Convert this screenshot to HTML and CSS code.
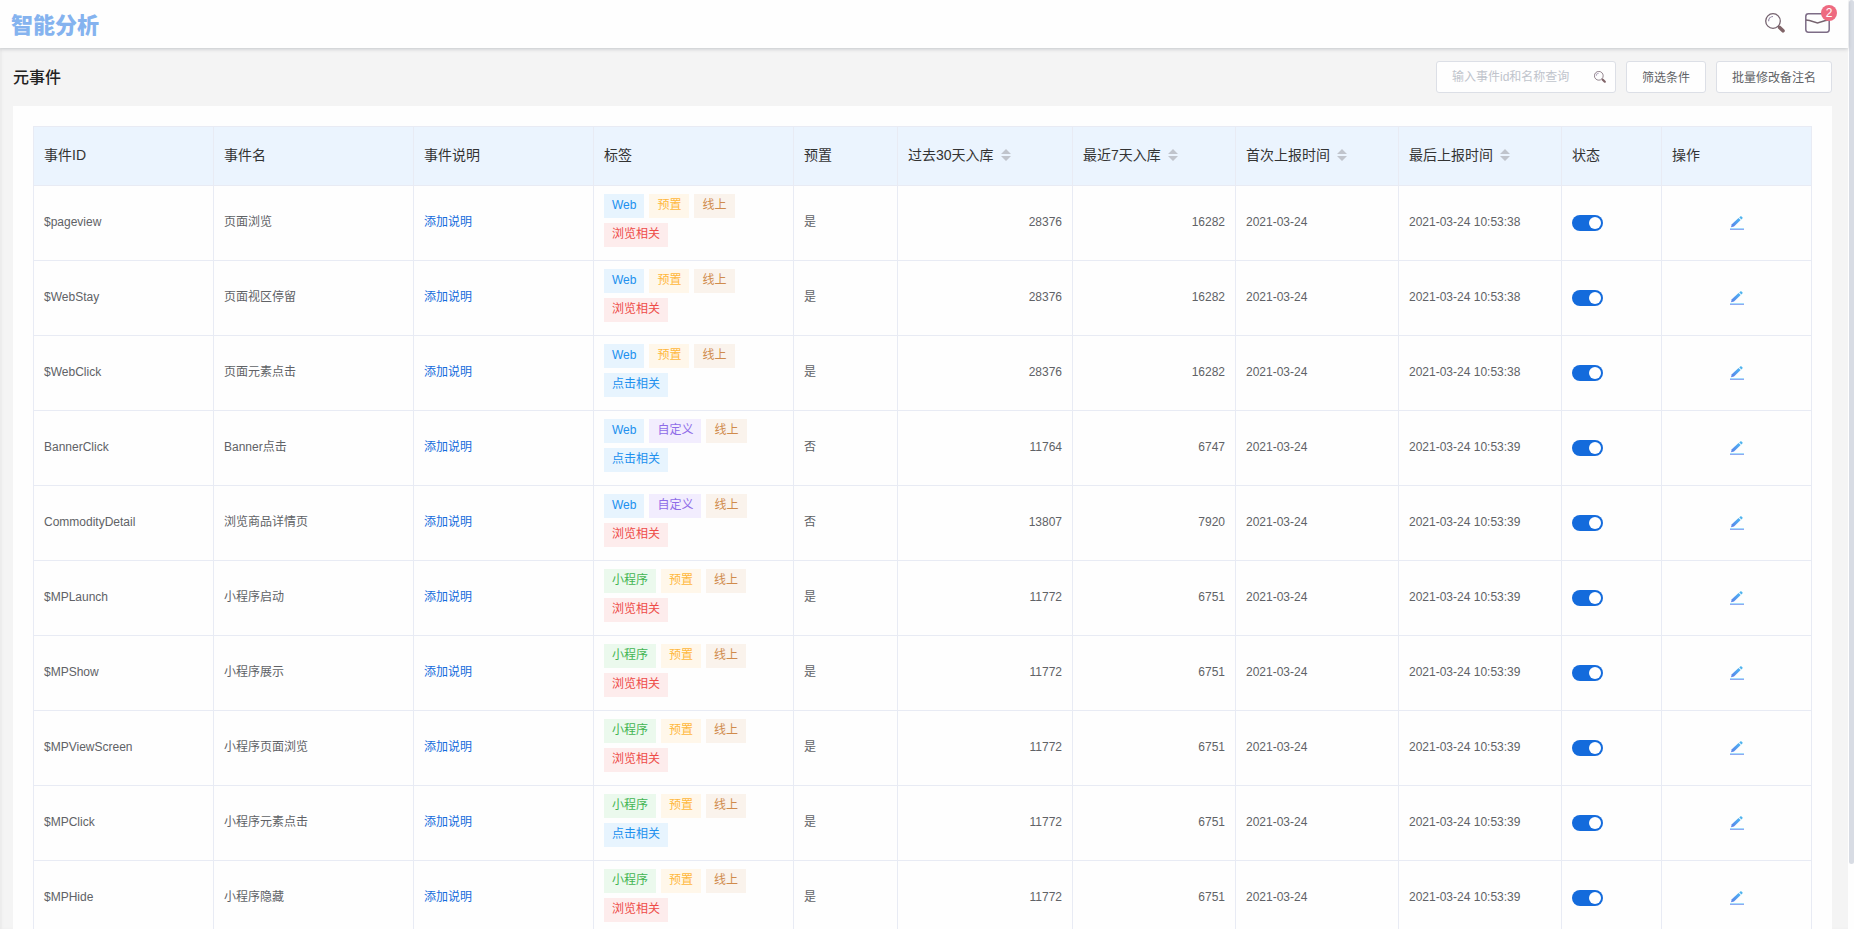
FILE: index.html
```html
<!DOCTYPE html>
<html lang="zh-CN">
<head>
    <meta charset="UTF-8">
    <meta name="viewport" content="width=device-width, initial-scale=1.0">
    <title>元事件 - 智能分析</title>
    <link rel="stylesheet" href="styles.css">
</head>
<body>
    <svg class="sprite" aria-hidden="true">
        <defs>
            <linearGradient id="pen-fill" x1="0" y1="1" x2="1" y2="0">
                <stop offset="0" stop-color="#5b7fe8"/>
                <stop offset="1" stop-color="#4cb8f5"/>
            </linearGradient>
        </defs>
        <symbol id="icon-search" viewBox="0 0 20 20">
            <circle cx="8" cy="8" r="7.3" fill="none" stroke="#75636f" stroke-width="1.3"/>
            <path d="M3.6 8.2A4.6 4.6 0 0 1 8 3.5" fill="none" stroke="#8f81a0" stroke-width="1.1"/>
            <path d="M13 13l1.6 1.4" stroke="#75636f" stroke-width="1.4"/>
            <path d="M14.6 14.4l3.4 3.4" stroke="#806468" stroke-width="3.6" stroke-linecap="round"/>
        </symbol>
        <symbol id="icon-mail" viewBox="0 0 25 20">
            <rect x="0.8" y="0.8" width="23.4" height="18.4" rx="2.6" fill="none" stroke="#7d6c86" stroke-width="1.5"/>
            <path d="M1 7l3.500.500L12.500 10l8-2.500L24 7" fill="none" stroke="#75636f" stroke-width="1.4"/>
        </symbol>
        <symbol id="icon-edit" viewBox="0 0 14 14">
            <path d="M1 11.300l.8-3L8.500 2l2.200 2.100-6.700 6.300z" fill="url(#pen-fill)"/>
            <path d="M9.300 1.400l.9-.9a1 1 0 0 1 1.400 0l.7.7a1 1 0 0 1 0 1.400l-.9.9z" fill="#4fb4ee"/>
            <path d="M0 12.500h14" stroke="#a5dcfa" stroke-width="1"/>
            <path d="M0 13.500h14" stroke="#8fa9f2" stroke-width="1"/>
        </symbol>
        <symbol id="icon-sort" viewBox="0 0 10 12">
            <path d="M5 0l5 5H0zM5 12l5-5H0z" fill="#c0c4cc"/>
        </symbol>
    </svg>

    <div class="app">
        <div class="page">
            <header class="topbar">
                <div class="brand">智能分析</div>
                <div class="topbar-tools">
                    <button type="button" class="icon-button" aria-label="搜索"><svg class="icon-search"><use href="#icon-search"/></svg></button>
                    <button type="button" class="icon-button" aria-label="消息"><svg class="icon-mail"><use href="#icon-mail"/></svg><span class="badge">2</span></button>
                </div>
            </header>

            <main class="content">
                <div class="toolbar">
                    <h1>元事件</h1>
                    <div class="actions">
                        <div class="search">
                            <input type="text" aria-label="查询事件" placeholder="输入事件id和名称查询">
                            <svg><use href="#icon-search"/></svg>
                        </div>
                        <button type="button" class="button">筛选条件</button>
                        <button type="button" class="button">批量修改备注名</button>
                    </div>
                </div>

                <section class="panel">
                    <table>
                        <colgroup>
                            <col class="col-id">
                            <col class="col-name">
                            <col class="col-desc">
                            <col class="col-tags">
                            <col class="col-preset">
                            <col class="col-month">
                            <col>
                            <col>
                            <col>
                            <col class="col-status">
                            <col class="col-action">
                        </colgroup>
                        <thead>
                            <tr>
                                <th>事件ID</th>
                                <th>事件名</th>
                                <th>事件说明</th>
                                <th>标签</th>
                                <th>预置</th>
                                <th>过去30天入库<svg class="sort"><use href="#icon-sort"/></svg></th>
                                <th>最近7天入库<svg class="sort"><use href="#icon-sort"/></svg></th>
                                <th>首次上报时间<svg class="sort"><use href="#icon-sort"/></svg></th>
                                <th>最后上报时间<svg class="sort"><use href="#icon-sort"/></svg></th>
                                <th>状态</th>
                                <th>操作</th>
                            </tr>
                        </thead>
                        <tbody>
                            <tr>
                                <td>$pageview</td>
                                <td>页面浏览</td>
                                <td><a href="#">添加说明</a></td>
                                <td><div class="tags"><span class="tag blue">Web</span><span class="tag yellow">预置</span><span class="tag brown">线上</span><span class="tag red">浏览相关</span></div></td>
                                <td>是</td>
                                <td class="num">28376</td>
                                <td class="num">16282</td>
                                <td>2021-03-24</td>
                                <td>2021-03-24 10:53:38</td>
                                <td class="control"><input type="checkbox" class="switch" aria-label="启用 $pageview" checked></td>
                                <td class="control"><button type="button" class="edit" aria-label="编辑"><svg><use href="#icon-edit"/></svg></button></td>
                            </tr>
                            <tr>
                                <td>$WebStay</td>
                                <td>页面视区停留</td>
                                <td><a href="#">添加说明</a></td>
                                <td><div class="tags"><span class="tag blue">Web</span><span class="tag yellow">预置</span><span class="tag brown">线上</span><span class="tag red">浏览相关</span></div></td>
                                <td>是</td>
                                <td class="num">28376</td>
                                <td class="num">16282</td>
                                <td>2021-03-24</td>
                                <td>2021-03-24 10:53:38</td>
                                <td class="control"><input type="checkbox" class="switch" aria-label="启用 $WebStay" checked></td>
                                <td class="control"><button type="button" class="edit" aria-label="编辑"><svg><use href="#icon-edit"/></svg></button></td>
                            </tr>
                            <tr>
                                <td>$WebClick</td>
                                <td>页面元素点击</td>
                                <td><a href="#">添加说明</a></td>
                                <td><div class="tags"><span class="tag blue">Web</span><span class="tag yellow">预置</span><span class="tag brown">线上</span><span class="tag blue">点击相关</span></div></td>
                                <td>是</td>
                                <td class="num">28376</td>
                                <td class="num">16282</td>
                                <td>2021-03-24</td>
                                <td>2021-03-24 10:53:38</td>
                                <td class="control"><input type="checkbox" class="switch" aria-label="启用 $WebClick" checked></td>
                                <td class="control"><button type="button" class="edit" aria-label="编辑"><svg><use href="#icon-edit"/></svg></button></td>
                            </tr>
                            <tr>
                                <td>BannerClick</td>
                                <td>Banner点击</td>
                                <td><a href="#">添加说明</a></td>
                                <td><div class="tags"><span class="tag blue">Web</span><span class="tag purple">自定义</span><span class="tag brown">线上</span><span class="tag blue">点击相关</span></div></td>
                                <td>否</td>
                                <td class="num">11764</td>
                                <td class="num">6747</td>
                                <td>2021-03-24</td>
                                <td>2021-03-24 10:53:39</td>
                                <td class="control"><input type="checkbox" class="switch" aria-label="启用 BannerClick" checked></td>
                                <td class="control"><button type="button" class="edit" aria-label="编辑"><svg><use href="#icon-edit"/></svg></button></td>
                            </tr>
                            <tr>
                                <td>CommodityDetail</td>
                                <td>浏览商品详情页</td>
                                <td><a href="#">添加说明</a></td>
                                <td><div class="tags"><span class="tag blue">Web</span><span class="tag purple">自定义</span><span class="tag brown">线上</span><span class="tag red">浏览相关</span></div></td>
                                <td>否</td>
                                <td class="num">13807</td>
                                <td class="num">7920</td>
                                <td>2021-03-24</td>
                                <td>2021-03-24 10:53:39</td>
                                <td class="control"><input type="checkbox" class="switch" aria-label="启用 CommodityDetail" checked></td>
                                <td class="control"><button type="button" class="edit" aria-label="编辑"><svg><use href="#icon-edit"/></svg></button></td>
                            </tr>
                            <tr>
                                <td>$MPLaunch</td>
                                <td>小程序启动</td>
                                <td><a href="#">添加说明</a></td>
                                <td><div class="tags"><span class="tag green">小程序</span><span class="tag yellow">预置</span><span class="tag brown">线上</span><span class="tag red">浏览相关</span></div></td>
                                <td>是</td>
                                <td class="num">11772</td>
                                <td class="num">6751</td>
                                <td>2021-03-24</td>
                                <td>2021-03-24 10:53:39</td>
                                <td class="control"><input type="checkbox" class="switch" aria-label="启用 $MPLaunch" checked></td>
                                <td class="control"><button type="button" class="edit" aria-label="编辑"><svg><use href="#icon-edit"/></svg></button></td>
                            </tr>
                            <tr>
                                <td>$MPShow</td>
                                <td>小程序展示</td>
                                <td><a href="#">添加说明</a></td>
                                <td><div class="tags"><span class="tag green">小程序</span><span class="tag yellow">预置</span><span class="tag brown">线上</span><span class="tag red">浏览相关</span></div></td>
                                <td>是</td>
                                <td class="num">11772</td>
                                <td class="num">6751</td>
                                <td>2021-03-24</td>
                                <td>2021-03-24 10:53:39</td>
                                <td class="control"><input type="checkbox" class="switch" aria-label="启用 $MPShow" checked></td>
                                <td class="control"><button type="button" class="edit" aria-label="编辑"><svg><use href="#icon-edit"/></svg></button></td>
                            </tr>
                            <tr>
                                <td>$MPViewScreen</td>
                                <td>小程序页面浏览</td>
                                <td><a href="#">添加说明</a></td>
                                <td><div class="tags"><span class="tag green">小程序</span><span class="tag yellow">预置</span><span class="tag brown">线上</span><span class="tag red">浏览相关</span></div></td>
                                <td>是</td>
                                <td class="num">11772</td>
                                <td class="num">6751</td>
                                <td>2021-03-24</td>
                                <td>2021-03-24 10:53:39</td>
                                <td class="control"><input type="checkbox" class="switch" aria-label="启用 $MPViewScreen" checked></td>
                                <td class="control"><button type="button" class="edit" aria-label="编辑"><svg><use href="#icon-edit"/></svg></button></td>
                            </tr>
                            <tr>
                                <td>$MPClick</td>
                                <td>小程序元素点击</td>
                                <td><a href="#">添加说明</a></td>
                                <td><div class="tags"><span class="tag green">小程序</span><span class="tag yellow">预置</span><span class="tag brown">线上</span><span class="tag blue">点击相关</span></div></td>
                                <td>是</td>
                                <td class="num">11772</td>
                                <td class="num">6751</td>
                                <td>2021-03-24</td>
                                <td>2021-03-24 10:53:39</td>
                                <td class="control"><input type="checkbox" class="switch" aria-label="启用 $MPClick" checked></td>
                                <td class="control"><button type="button" class="edit" aria-label="编辑"><svg><use href="#icon-edit"/></svg></button></td>
                            </tr>
                            <tr>
                                <td>$MPHide</td>
                                <td>小程序隐藏</td>
                                <td><a href="#">添加说明</a></td>
                                <td><div class="tags"><span class="tag green">小程序</span><span class="tag yellow">预置</span><span class="tag brown">线上</span><span class="tag red">浏览相关</span></div></td>
                                <td>是</td>
                                <td class="num">11772</td>
                                <td class="num">6751</td>
                                <td>2021-03-24</td>
                                <td>2021-03-24 10:53:39</td>
                                <td class="control"><input type="checkbox" class="switch" aria-label="启用 $MPHide" checked></td>
                                <td class="control"><button type="button" class="edit" aria-label="编辑"><svg><use href="#icon-edit"/></svg></button></td>
                            </tr>
                        </tbody>
                    </table>
                </section>
            </main>
        </div>
        <div class="scrollbar"><div class="scrollbar-thumb"></div></div>
    </div>
</body>
</html>
```
FILE: styles.css
```css
* {
    box-sizing: border-box;
}
body {
    margin: 0;
    font-family: "Liberation Sans", "Noto Sans CJK SC", sans-serif;
    font-size: 12px;
    color: #606266;
    background: #fefefe;
}
button,
input {
    font: inherit;
    margin: 0;
}
.sprite {
    position: absolute;
    width: 0;
    height: 0;
}
.app {
    display: flex;
    height: 100vh;
    overflow: hidden;
}
.page {
    flex: 1;
    min-width: 0;
    display: flex;
    flex-direction: column;
}

/* top bar */
.topbar {
    flex: none;
    position: relative;
    display: flex;
    align-items: center;
    justify-content: space-between;
    height: 48px;
    padding: 0 18px 2px 11px;
    background: #fefefe;
    box-shadow: 0 1px 4px rgba(0, 21, 41, 0.2);
}
.brand {
    font-family: "Noto Sans CJK SC", sans-serif;
    font-size: 22px;
    line-height: 44px;
    font-weight: 900;
    color: #85b3ef;
}
.topbar-tools {
    display: flex;
    align-items: center;
    gap: 20px;
}
.icon-button {
    position: relative;
    display: block;
    padding: 0;
    border: none;
    background: none;
    cursor: pointer;
}
.icon-button svg {
    display: block;
    height: 20px;
}
.icon-search {
    width: 20px;
}
.icon-mail {
    width: 25px;
}
.badge {
    position: absolute;
    top: -8px;
    right: -7px;
    width: 16px;
    height: 16px;
    border-radius: 8px;
    background: #ee6a80;
    color: #fff;
    line-height: 16px;
    text-align: center;
}

/* page */
.content {
    flex: 1;
    min-height: 0;
    padding: 0 16px 0 13px;
    background: #f4f4f4;
    box-shadow: inset 2px 0 2px #ebebeb;
}
.toolbar {
    display: flex;
    align-items: center;
    justify-content: space-between;
    height: 58px;
}
h1 {
    margin: 0;
    padding-bottom: 3px;
    font-size: 16px;
    font-weight: 500;
    color: #222;
}
.actions {
    display: flex;
    gap: 10px;
}
.search {
    display: flex;
    align-items: center;
    width: 180px;
    height: 32px;
    padding: 0 9px 0 15px;
    border: 1px solid #dcdfe6;
    border-radius: 3px;
    background: #fefefe;
}
.search input {
    flex: 1;
    min-width: 0;
    padding: 0;
    border: none;
    outline: none;
    background: none;
    color: #606266;
}
.search input::placeholder {
    color: #c0c4cc;
}
.search svg {
    width: 12px;
    height: 12px;
}
.button {
    height: 32px;
    padding: 0 15px 2px;
    border: 1px solid #dcdfe6;
    border-radius: 3px;
    background: #fefefe;
    color: #606266;
    white-space: nowrap;
    cursor: pointer;
}
.panel {
    padding: 20px;
    background: #fefefe;
}

/* table */
table {
    width: 100%;
    table-layout: fixed;
    border-collapse: separate;
    border-spacing: 0;
    border: 1px solid #e8ebf4;
    border-width: 1px 0 0 1px;
}
.col-id,
.col-desc {
    width: 180px;
}
.col-name,
.col-tags {
    width: 200px;
}
.col-preset {
    width: 104px;
}
.col-month {
    width: 175px;
}
.col-status {
    width: 100px;
}
.col-action {
    width: 150px;
}
th,
td {
    padding: 0 10px 2px;
    border: 1px solid #e8ebf4;
    border-width: 0 1px 1px 0;
    text-align: left;
    white-space: nowrap;
}
th {
    height: 59px;
    padding-bottom: 4px;
    background: #ebf4fe;
    color: #333;
    font-size: 14px;
    font-weight: 400;
}
td {
    height: 75px;
    line-height: 18px;
}
td.num {
    text-align: right;
}
td.control {
    padding-bottom: 0;
}
td a {
    color: #146bdc;
    text-decoration: none;
}
.sort {
    width: 10px;
    height: 12px;
    margin-left: 7px;
    vertical-align: -1px;
}
.tags {
    display: flex;
    flex-wrap: wrap;
    gap: 5px;
    padding-bottom: 4px;
}
/* keeps the last tag on the second line */
.tags .tag:nth-child(3) {
    margin-right: 32px;
}
.tag {
    height: 24px;
    padding: 0 8px;
    line-height: 22px;
}
.blue {
    background: #e7f4fe;
    color: #2090ee;
}
.yellow {
    background: #fff7ea;
    color: #ffb83c;
}
.brown {
    background: #faf3ec;
    color: #d08b4c;
}
.red {
    background: #fdecec;
    color: #ee4b48;
}
.purple {
    background: #f2edfe;
    color: #8e6be8;
}
.green {
    background: #ebf9ed;
    color: #43b552;
}
.switch {
    appearance: none;
    display: block;
    width: 31px;
    height: 16px;
    border-radius: 8px;
    background: #c0c4cc;
    cursor: pointer;
}
.switch::before {
    content: "";
    display: block;
    width: 12px;
    height: 12px;
    margin: 2px;
    border-radius: 50%;
    background: #fff;
    float: left;
}
.switch:checked {
    background: #146bdc;
}
.switch:checked::before {
    float: right;
}
.edit {
    display: block;
    margin: 0 auto;
    padding: 0;
    border: none;
    background: none;
    cursor: pointer;
}
.edit svg {
    display: block;
    width: 14px;
    height: 14px;
}

/* scrollbar */
.scrollbar {
    flex: none;
    width: 6px;
    padding-left: 1px;
    background: #fefefe;
}
.scrollbar-thumb {
    height: 93%;
    border-radius: 3px;
    background: #d8dce4;
}
```
